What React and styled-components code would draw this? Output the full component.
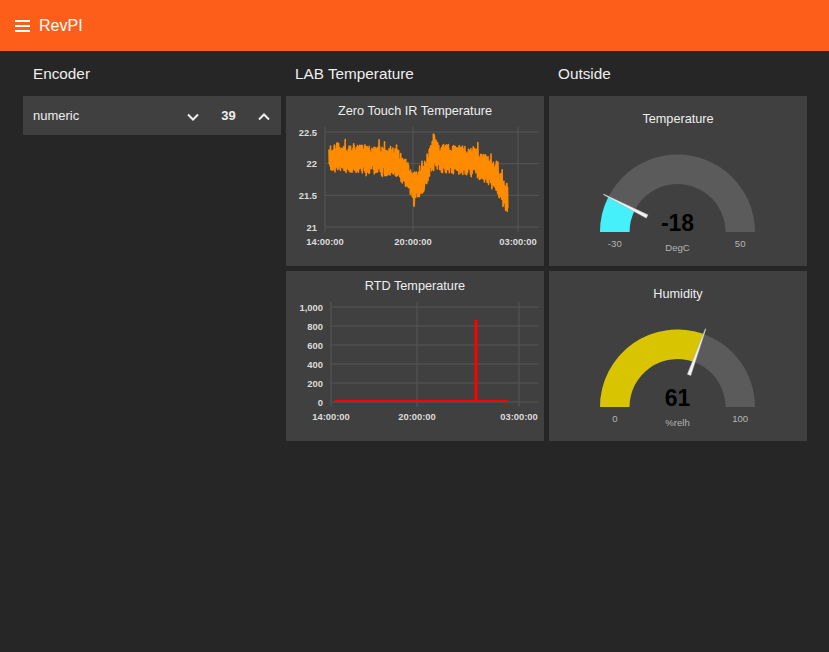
import styled, { createGlobalStyle } from 'styled-components'

const GlobalStyle = createGlobalStyle`
  html, body {
    margin: 0;
    padding: 0;
    background: #262626;
    font-family: "Liberation Sans", Arial, sans-serif;
  }
`

const Shell = styled.div`
  min-height: 652px;
  background: #262626;
`

const Toolbar = styled.header`
  height: 51px;
  background: #fd5f1b;
  display: flex;
  align-items: center;
  gap: 9px;
  padding-left: 15px;
  color: #fff;
`

const AppName = styled.span`
  font-size: 16px;
`

const Board = styled.main`
  display: flex;
  gap: 5px;
  padding-left: 23px;
`

const Column = styled.section`
  width: 258px;
  display: flex;
  flex-direction: column;
  gap: 5px;
`

const GroupTitle = styled.h2`
  margin: 0;
  height: 40px;
  line-height: 45px;
  padding-left: ${p => p.$indent || 10}px;
  font-size: 15.3px;
  font-weight: normal;
  color: #eee;
`

const Card = styled.div`
  background: #404040;
  height: ${p => p.$h}px;
  display: flex;
  flex-direction: column;
`

const CardTitle = styled.div`
  height: ${p => p.$h}px;
  line-height: ${p => p.$h}px;
  text-align: center;
  font-size: 12.7px;
  color: #eee;
`

const NumericRow = styled.div`
  height: 39px;
  background: #404040;
  display: flex;
  align-items: center;
  padding: 0 5px 0 10px;
  color: #eee;
  font-size: 13px;
`

const Label = styled.span`
  flex: 1;
`

const StepButton = styled.span`
  width: 24px;
  display: flex;
  justify-content: center;
  margin-top: 2px;
`

const StepValue = styled.span`
  width: 47px;
  text-align: center;
  font-weight: bold;
`

function Chevron({ up }) {
  return (
    <svg width="24" height="24" viewBox="0 0 24 24">
      <polyline
        points={up ? '7,14.5 12,9.5 17,14.5' : '7,9.5 12,14.5 17,9.5'}
        fill="none"
        stroke="#eee"
        strokeWidth="2"
      />
    </svg>
  )
}

function Hamburger() {
  return (
    <svg width="15" height="12" viewBox="0 0 15 12">
      <rect x="0" y="0" width="15" height="2" fill="#fff" />
      <rect x="0" y="5" width="15" height="2" fill="#fff" />
      <rect x="0" y="10" width="15" height="2" fill="#fff" />
    </svg>
  )
}

// deterministic noise so the chart is the same on every load
function rng(seed) {
  let s = seed
  return () => {
    s = (s * 1664525 + 1013904223) % 4294967296
    return s / 4294967296
  }
}

const irTrend = [
  [43, 22.1], [77, 22.08], [110, 22.02], [120, 21.85], [128, 21.65],
  [136, 21.72], [143, 22.0], [148, 22.2], [154, 22.08], [187, 22.05],
  [200, 21.92], [212, 21.72], [222, 21.45]
]

function trendAt(x) {
  for (let i = 0; i < irTrend.length - 1; i++) {
    const [x0, v0] = irTrend[i]
    const [x1, v1] = irTrend[i + 1]
    if (x >= x0 && x <= x1) return v0 + ((x - x0) / (x1 - x0)) * (v1 - v0)
  }
  return irTrend[irTrend.length - 1][1]
}

// readings flip between a high and a low cluster, which paints the solid band
function irPoints() {
  const r = rng(11)
  const pts = []
  let high = true
  for (let x = 43; x <= 222; x += 0.3) {
    const spread = 0.09 + r() * 0.14
    let v = trendAt(x) + (high ? spread : -spread)
    if (r() > 0.95) v += (high ? 1 : -1) * 0.1
    if (Math.abs(x - 128) < 0.3) v = 21.33
    if (Math.abs(x - 148) < 0.3) v = 22.45
    if (r() > 0.25) high = !high
    const y = 131 - (v - 21) * (95 / 1.5)
    pts.push(`${x.toFixed(2)},${y.toFixed(2)}`)
  }
  return pts.join(' ')
}

const axisText = {
  fontSize: 9.4,
  fontWeight: 'bold',
  fill: '#dcdcdc',
  fontFamily: '"Liberation Sans", Arial, sans-serif'
}

function Grid({ left, cols, rows }) {
  return (
    <g>
      {rows.map(r => (
        <g key={r.label}>
          <line x1={left} x2={253} y1={r.y} y2={r.y} stroke="#575757" strokeWidth="1" />
          <text x={left - 8} y={r.y + 3.5} textAnchor="end" style={axisText}>{r.label}</text>
        </g>
      ))}
      {cols.map(c => (
        <g key={c.label}>
          <line x1={c.x} x2={c.x} y1={31} y2={136} stroke="#575757" strokeWidth="1" />
          <text x={c.x} y={149} textAnchor="middle" style={axisText}>{c.label}</text>
        </g>
      ))}
    </g>
  )
}

function IrChart() {
  return (
    <svg width="258" height="140" viewBox="0 30 258 140">
      <Grid
        left={39}
        cols={[{ x: 39, label: '14:00:00' }, { x: 127, label: '20:00:00' }, { x: 232, label: '03:00:00' }]}
        rows={[
          { y: 36, label: '22.5' }, { y: 67.7, label: '22' },
          { y: 99.3, label: '21.5' }, { y: 131, label: '21' }
        ]}
      />
      <polyline points={irPoints()} fill="none" stroke="#ff8b00" strokeWidth="1.6" strokeLinejoin="round" />
    </svg>
  )
}

function RtdChart() {
  const rows = [1000, 800, 600, 400, 200, 0].map((v, i) => ({
    y: 36 + i * 19,
    label: v === 1000 ? '1,000' : String(v)
  }))
  return (
    <svg width="258" height="140" viewBox="0 30 258 140">
      <Grid
        left={45}
        cols={[{ x: 45, label: '14:00:00' }, { x: 131, label: '20:00:00' }, { x: 233, label: '03:00:00' }]}
        rows={rows}
      />
      <polyline
        points="49,130 189.5,130 189.5,50 190.5,50 190.5,130 222,130"
        fill="none"
        stroke="#ff0000"
        strokeWidth="2"
      />
    </svg>
  )
}

function polar(cx, cy, r, f) {
  const t = Math.PI * (1 - f)
  return [cx + r * Math.cos(t), cy - r * Math.sin(t)]
}

function bandPath(cx, cy, ro, ri, f0, f1) {
  const [ax, ay] = polar(cx, cy, ro, f0)
  const [bx, by] = polar(cx, cy, ro, f1)
  const [cx2, cy2] = polar(cx, cy, ri, f1)
  const [dx, dy] = polar(cx, cy, ri, f0)
  return `M${ax},${ay} A${ro},${ro} 0 0 1 ${bx},${by} L${cx2},${cy2} A${ri},${ri} 0 0 0 ${dx},${dy} Z`
}

function Gauge({ value, min, max, unit, color }) {
  const cx = 128.5
  const cy = 136
  const f = (value - min) / (max - min)
  const t = Math.PI * (1 - f)
  const ux = Math.cos(t)
  const uy = -Math.sin(t)
  const px = -uy
  const py = ux
  const tip = [cx + ux * 83, cy + uy * 83]
  const base = [cx + ux * 34, cy + uy * 34]
  const needle = [
    [tip[0] + px * 0.4, tip[1] + py * 0.4],
    [tip[0] - px * 0.4, tip[1] - py * 0.4],
    [base[0] - px * 1.9, base[1] - py * 1.9],
    [base[0] + px * 1.9, base[1] + py * 1.9]
  ].map(p => p.join(',')).join(' ')
  const small = { fontSize: 9.6, fill: '#b4b4b4', fontFamily: '"Liberation Sans", Arial, sans-serif' }
  return (
    <svg width="258" height="123" viewBox="0 47 258 123">
      <path d={bandPath(cx, cy, 77.5, 48, 0, 1)} fill="#5b5b5b" />
      <path d={bandPath(cx, cy, 77.5, 48, 0, f)} fill={color} />
      <polygon points={needle} fill="#f2f2f2" stroke="#9a9a9a" strokeWidth="0.4" />
      <text
        x={cx}
        y={135}
        textAnchor="middle"
        style={{ fontSize: 23, fontWeight: 'bold', fill: '#000', fontFamily: '"Liberation Sans", Arial, sans-serif' }}
      >
        {value}
      </text>
      <text x={65.8} y={151} textAnchor="middle" style={small}>{min}</text>
      <text x={191.2} y={151} textAnchor="middle" style={small}>{max}</text>
      <text x={cx} y={154.5} textAnchor="middle" style={small}>{unit}</text>
    </svg>
  )
}

export default function App() {
  return (
    <Shell>
      <GlobalStyle />
      <Toolbar>
        <Hamburger />
        <AppName>RevPI</AppName>
      </Toolbar>
      <Board>
        <Column>
          <GroupTitle>Encoder</GroupTitle>
          <NumericRow>
            <Label>numeric</Label>
            <StepButton><Chevron /></StepButton>
            <StepValue>39</StepValue>
            <StepButton><Chevron up /></StepButton>
          </NumericRow>
        </Column>
        <Column>
          <GroupTitle $indent={9}>LAB Temperature</GroupTitle>
          <Card $h={170}>
            <CardTitle $h={30}>Zero Touch IR Temperature</CardTitle>
            <IrChart />
          </Card>
          <Card $h={170}>
            <CardTitle $h={30}>RTD Temperature</CardTitle>
            <RtdChart />
          </Card>
        </Column>
        <Column>
          <GroupTitle $indent={9}>Outside</GroupTitle>
          <Card $h={170}>
            <CardTitle $h={47}>Temperature</CardTitle>
            <Gauge value={-18} min={-30} max={50} unit="DegC" color="#45f0fb" />
          </Card>
          <Card $h={170}>
            <CardTitle $h={47}>Humidity</CardTitle>
            <Gauge value={61} min={0} max={100} unit="%relh" color="#d8c400" />
          </Card>
        </Column>
      </Board>
    </Shell>
  )
}
